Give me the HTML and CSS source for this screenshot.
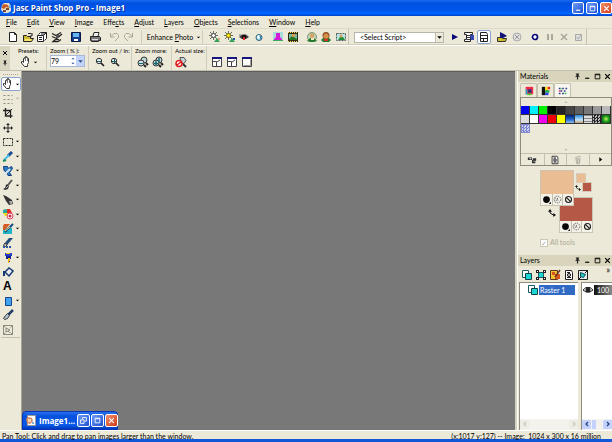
FILE: index.html
```html
<!DOCTYPE html>
<html lang="en">
<head>
<meta charset="utf-8">
<title>Jasc Paint Shop Pro - Image1</title>
<link rel="stylesheet" href="styles.css">
</head>
<body>
<svg class="defs" aria-hidden="true">
<symbol id="logo" viewBox="0 0 12 12"><path fill="#e8dccb" d="M2 3l2-2h5l2 3v5l-3 2H4L1 8z"/><path fill="#c45d25" d="M2 4l2-2 4 1 1 3-3-1-2 2-2-1z"/><path fill="#764936" d="M6 6h3v2H6zM3 8h3v2H3z"/><path fill="#77b4db" d="M9 3h2v3H9z"/></symbol>
<symbol id="page" viewBox="0 0 12 12"><path fill="#fff" stroke="#999" d="M2.500 .500h8v10h-8z"/><path fill="#d98a58" d="M1 4l2-2 4 1 1 3-3 3-3-1z"/><path fill="#f3d7b8" d="M3 4h3v3H3z"/><path fill="#77b4db" d="M7 7h2v2H7z"/></symbol>
<symbol id="new" viewBox="0 0 12 12"><path fill="#fff" stroke="#222" d="M2.500 1.500h5l2 2v7h-7zM7.500 1.500v2h2"/></symbol>
<symbol id="open" viewBox="0 0 12 12"><path fill="#d0bd32" stroke="#222" d="M1.500 10.500v-6h3l1 1h3v2h3l-2 3z"/><path fill="#f8e76a" d="M3 8h7l-1 2H2z"/><path fill="none" stroke="#222" d="M6 2.500h3l1 1M10 2v3H8"/></symbol>
<symbol id="browse" viewBox="0 0 12 12"><path fill="#fff" stroke="#222" d="M1.500 4.500h6v6h-6zM2.500 3.500l2-2h6v6l-2 2M7.500 4.500l3-3"/><path stroke="#222" d="M3 6.500h3M3 8.500h3M5 3h4"/></symbol>
<symbol id="twain" viewBox="0 0 12 12"><path fill="none" stroke="#222" stroke-width="1.300" d="M1 2.500l4 2 5-3M1 5.500l7 3M11 3L2 10.500h5l3-2"/><path fill="#555" d="M5 4h3v3H5z"/></symbol>
<symbol id="save" viewBox="0 0 12 12"><path fill="#153f8e" stroke="#061844" d="M1.500 1.500h9v9h-9z"/><path fill="#63b6ef" d="M3 2h6v4H3z"/><path fill="#fff" d="M4 8h4v2H4z"/></symbol>
<symbol id="print" viewBox="0 0 12 12"><path fill="#fff" stroke="#222" d="M4 5l1-3.500h5L9 5"/><path fill="#777" stroke="#222" d="M1.500 5.500h9l1 1v3h-2v1h-7v-1h-1z"/><path stroke="#ddd" d="M3 8.500h6M5 3.500h3"/></symbol>
<symbol id="undo" viewBox="0 0 12 12"><path fill="none" stroke="#aaa69b" d="M2.500 2v4h4M3 5.500l3-3h3l1.500 2v2L7 10"/></symbol>
<symbol id="redo" viewBox="0 0 12 12"><path fill="none" stroke="#aaa69b" d="M9.500 2v4h-4M9 5.500l-3-3H3L1.500 4.500v2L5 10"/></symbol>
<symbol id="sun" viewBox="0 0 12 12"><path stroke="#333" stroke-width=".700" d="M4.500 0v9M0 4.500h9M1 1l7 7M8 1L1 8"/><circle cx="4.500" cy="4.500" r="2" fill="#fff" stroke="#444"/><path fill="#35a05a" d="M5 11l3-4 3 4z"/><path fill="#e0a17c" d="M9 7h2v2H9z"/></symbol>
<symbol id="sun2" viewBox="0 0 12 12"><path stroke="#333" stroke-width=".700" d="M4.500 0v9M0 4.500h9M1 1l7 7M8 1L1 8"/><circle cx="4.500" cy="4.500" r="2" fill="#ffed16" stroke="#766b00"/><path fill="#35a05a" d="M5 11l3-4 3 4z"/><path fill="#2854aa" d="M9 7h2v2H9z"/></symbol>
<symbol id="redeye" viewBox="0 0 12 12"><path fill="#444" d="M1 6l3-2.500h4L11 6 8 8H4z"/><circle cx="6" cy="6" r="2.300" fill="#111"/><path fill="#dd2626" d="M5 6h2v3H5z"/><path stroke="#777" d="M1 4h2"/></symbol>
<symbol id="drop" viewBox="0 0 12 12"><circle cx="6" cy="6.500" r="3" fill="#9adbea" stroke="#315c76"/><path fill="#fff" d="M4 5l2-1 1 3-2 1z"/><path stroke="#176cab" d="M7 5l1 3"/></symbol>
<symbol id="pinkman" viewBox="0 0 12 12"><path fill="#a8dedb" d="M1 1h10v9H1z"/><path fill="#35a85a" d="M1 9h10v1H1z"/><path fill="#d61bd6" d="M4 2h4v4l2 2v1H2V8l2-2z"/></symbol>
<symbol id="film" viewBox="0 0 12 12"><path fill="#302b17" d="M1 1h10v10H1z"/><path fill="#77b9a0" d="M2 3h8v6H2z"/><path fill="#237522" d="M2 8l3-3 5 3v1H2z"/><path fill="#d99b53" d="M5 3h3v3H5z"/><path stroke="#f3df5a" stroke-dasharray="1 1" d="M1 1.500h10M1 10.500h10"/></symbol>
<symbol id="portrait" viewBox="0 0 12 12"><circle cx="6" cy="6" r="4.500" fill="#c6d5ba" stroke="#789978"/><path fill="#267a30" d="M1 10l3-3h4l3 3-3 1H4z"/><circle cx="6" cy="4.500" r="2.300" fill="#d3a266"/><path fill="#f6e7bf" d="M5 7h3v2H5z"/></symbol>
<symbol id="portrait2" viewBox="0 0 12 12"><path fill="#267a30" d="M1 9l3-3h4l3 3-2 2H3z"/><circle cx="6" cy="4.500" r="3.500" fill="#8e4d24"/><circle cx="6" cy="5" r="2.600" fill="#d59049"/><path fill="#d42e26" d="M4 8h4v2H4z"/></symbol>
<symbol id="frame" viewBox="0 0 12 12"><path fill="#b8e8e1" stroke="#555" stroke-dasharray="2 1" d="M1.500 2.500h9v7h-9z"/><path fill="#248b3a" d="M3 9l2-3h3l2 3z"/><circle cx="6" cy="5" r="1.500" fill="#d69c66"/></symbol>
<symbol id="play" viewBox="0 0 12 12"><path fill="#080878" d="M3 3l6 3-6 3z"/></symbol>
<symbol id="scriptedit" viewBox="0 0 12 12"><path fill="#fff" stroke="#222" d="M1.500 1.500h8v2h-2v7h-6v-2h2v-5h-2z"/><path stroke="#333" d="M4 4.500h4M4 6.500h4M4 8.500h3"/><path fill="#3949b4" d="M7 4h4v5H8z"/></symbol>
<symbol id="panel" viewBox="0 0 12 12"><path fill="#fff" stroke="#222" d="M2.500 1.500h6l1 2v7h-7zM2 4.500h8M2 7.500h8M5.500 8v3"/></symbol>
<symbol id="runscript" viewBox="0 0 12 12"><path fill="#cdbd24" stroke="#333" d="M1.500 10.500v-4h4l1 1h4l-1 3z"/><path fill="#101174" d="M4 1l4 2 3 2-4 2H4z"/></symbol>
<symbol id="stop" viewBox="0 0 12 12"><circle cx="6" cy="6" r="4" fill="#ddd" stroke="#aaa"/><path stroke="#999" d="M4 4l4 4M8 4L4 8"/></symbol>
<symbol id="record" viewBox="0 0 12 12"><circle cx="6" cy="6" r="2.500" fill="#fff" stroke="#080878" stroke-width="1.700"/></symbol>
<symbol id="pause" viewBox="0 0 12 12"><path fill="#aaa69b" d="M3 3h2v6H3zM7 3h2v6H7z"/></symbol>
<symbol id="cross" viewBox="0 0 12 12"><path fill="none" stroke="#aaa69b" stroke-width="1.500" d="M3 3l6 6M9 3L3 9"/></symbol>
<symbol id="saverec" viewBox="0 0 12 12"><path fill="#ddd" stroke="#aaa" d="M2.500 3.500h6v6h-6zM4 6l1 2 3-4"/></symbol>
<symbol id="hand" viewBox="0 0 12 12"><path fill="#fff" stroke="#333" d="M4.500 10.500L1.500 7V5.500h1l1 1v-4h1V1.500h1v-1h1v1h1v1h1v4l-1 2v2z"/><path stroke="#777" d="M5.500 2v3M7.500 3v2"/></symbol>
<symbol id="zoomout" viewBox="0 0 12 12"><circle cx="5" cy="5" r="2.700" fill="#e5f0f0" stroke="#333"/><path stroke="#222" stroke-width="1.700" d="M7 7l3 3"/><path stroke="#1e5d66" d="M3 5.500h4"/></symbol>
<symbol id="zoomin" viewBox="0 0 12 12"><circle cx="5" cy="5" r="2.700" fill="#e5f0f0" stroke="#333"/><path stroke="#222" stroke-width="1.700" d="M7 7l3 3"/><path stroke="#1e5d66" d="M3 5.500h4M5.500 3v4"/></symbol>
<symbol id="zoommore" viewBox="0 0 12 12"><circle cx="7" cy="4" r="3" fill="#bcd6d8" stroke="#333"/><circle cx="4" cy="7" r="3" fill="#cce0df" stroke="#333"/><path stroke="#222" stroke-width="2" d="M7 9l2 2M9 7l2 2"/><path stroke="#176c74" d="M2 7.500h4"/></symbol>
<symbol id="zoommorein" viewBox="0 0 12 12"><circle cx="7" cy="4" r="3" fill="#bcd6d8" stroke="#333"/><circle cx="4" cy="7" r="3" fill="#cce0df" stroke="#333"/><path stroke="#222" stroke-width="2" d="M7 9l2 2M9 7l2 2"/><path stroke="#176c74" stroke-width="1.500" d="M2 7.500h4M4 5v4M7 2v4"/></symbol>
<symbol id="actual" viewBox="0 0 12 12"><path fill="#bfd3dc" stroke="#555" d="M5 1.500h4l2 3-2 3H6z"/><path stroke="#333" stroke-width="2" d="M8 8l3 3"/><circle cx="4" cy="7.500" r="3" fill="#fff" stroke="#df1919" stroke-width="1.500"/><path stroke="#df1919" stroke-width="1.500" d="M2 9l4-3"/></symbol>
<symbol id="fit" viewBox="0 0 12 12"><path fill="#fff" stroke="#444" d="M1.500 1.500h9v9h-9zM1.500 5.500h4v5M6 6l3-2"/><path fill="#16167f" d="M1 1h10v2H1z"/></symbol>
<symbol id="fit2" viewBox="0 0 12 12"><path fill="#fff" stroke="#444" d="M1.500 1.500h9v9h-9z"/><path fill="#16167f" d="M1 1h10v2H1z"/><path fill="none" stroke="#999" d="M2.500 9.500h7v-6"/></symbol>
<symbol id="deform" viewBox="0 0 12 12"><path fill="none" stroke="#8b887c" stroke-dasharray="2 2" d="M1.500 2.500h9M1.500 6.500h9M1.500 10.500h9"/></symbol>
<symbol id="crop" viewBox="0 0 12 12"><path fill="none" stroke="#222" stroke-width="1.300" d="M3.500 1v8h7M1 3.500h7.500V11"/><path stroke="#222" d="M4 8l6-6"/></symbol>
<symbol id="move" viewBox="0 0 12 12"><path fill="#222" d="M6 1L4 3h4zM6 11L4 9h4zM1 6l2-2v4zM11 6L9 4v4z"/><path stroke="#222" d="M6 2v8M2 6h8"/></symbol>
<symbol id="marquee" viewBox="0 0 12 12"><path fill="none" stroke="#222" stroke-dasharray="2 1" d="M1.500 2.500h9v7h-9z"/></symbol>
<symbol id="dropper" viewBox="0 0 12 12"><path stroke="#1b4b93" stroke-width="3" d="M10 2L6 6"/><path stroke="#48bfe6" stroke-width="2" d="M7 5l-5 5"/><path stroke="#168a58" stroke-width="2" d="M1 11l3-1"/></symbol>
<symbol id="clone" viewBox="0 0 12 12"><path fill="#287cc5" stroke="#153c81" d="M1.500 1.500h4l1 2 3-2 1 2-3 4 2 3H6l-1-3-3-2z"/><path stroke="#d2e9ef" stroke-width="2" d="M2 10l6-6"/></symbol>
<symbol id="brush" viewBox="0 0 12 12"><path stroke="#555" stroke-width="2" d="M10 1L6 6"/><path fill="#333" d="M5 5l2 2-1 3-3 1-2-1 2-1 1-3z"/><path stroke="#bbb" d="M6 7L4 9"/></symbol>
<symbol id="air" viewBox="0 0 12 12"><path fill="#333" d="M1 1l3 1 6 4 1 4-4 1-3-4z"/><path fill="#aaa" d="M7 7h3v3H8z"/></symbol>
<symbol id="colorrep" viewBox="0 0 12 12"><path fill="#2ba69e" d="M1 5V2l3-1 3 2v4z"/><path fill="#f1da20" d="M1 5h5v3H3z"/><path fill="#e42c24" d="M5 1h3l2 4H5z"/><circle cx="8" cy="8" r="3" fill="#fff" stroke="#df3e61"/><circle cx="8" cy="8" r="1.500" fill="#ce2940"/></symbol>
<symbol id="retouch" viewBox="0 0 12 12"><path fill="#24b4c8" d="M1 5h9v6H1z"/><path fill="#d75b24" d="M2 1h6L3 7H1V3z"/><path stroke="#174883" stroke-width="2" d="M11 1L3 9"/><path stroke="#ffe46a" d="M8 4L3 8"/></symbol>
<symbol id="eraser" viewBox="0 0 12 12"><path fill="#234e7b" d="M7 1h4L6 7H2z"/><path fill="#ddd" stroke="#333" d="M2.500 6.500l3 1-2 2-2-1z"/><path stroke="#2758a3" stroke-width="2" stroke-dasharray="2 1" d="M1 10h9"/></symbol>
<symbol id="tube" viewBox="0 0 12 12"><path fill="#1f3fc4" d="M3 1h7v3H3z"/><path fill="#171f94" d="M4 4h5v3H8v3H6V7H4z"/><path fill="#f1bd16" d="M4 1h4v1H4zM6 6h2v3H7v2H6z"/></symbol>
<symbol id="fill" viewBox="0 0 12 12"><path fill="#eee" stroke="#163975" stroke-width="1.500" d="M3 6l4-4 4 3-4 5z"/><path fill="#163975" d="M1 5h2v5H1z"/></symbol>
<symbol id="rect" viewBox="0 0 12 12"><path fill="#3fa2ed" stroke="#194592" d="M3.500 2.500h6v8h-6z"/></symbol>
<symbol id="pen" viewBox="0 0 12 12"><path stroke="#263d69" stroke-width="2.500" d="M11 1L6 6"/><path fill="#aac5d0" stroke="#333" d="M5.500 4.500l2 2-2 3-3 1-1-1 2-3z"/></symbol>
<symbol id="objsel" viewBox="0 0 12 12"><path fill="none" stroke="#77746a" stroke-width=".800" d="M1.500 1.500h9v9h-9zM4 4l4 2-2 1 2 2M4 4v4l2-1M1.500 1.500l2 2M10.500 1.500l-2 2M1.500 10.500l2-2M10.500 10.500l-2-2"/></symbol>
<symbol id="tabframe" viewBox="0 0 12 12"><path fill="#ef2b45" d="M2 1h9v9H2z"/><path fill="#15afd3" d="M2 4h2v6H2z"/><path fill="#19347e" d="M5 4h4v4H5z"/><path fill="#4bca34" d="M4 9h5v2H4z"/></symbol>
<symbol id="tabrainbow" viewBox="0 0 12 12"><path fill="#111" d="M1 1h4v10H1z"/><path fill="#ffdc15" d="M5 1h3v5H5z"/><path fill="#ef2e22" d="M8 1h3v3H8z"/><path fill="#1fac49" d="M5 5h5v3H5z"/><path fill="#3042e2" d="M5 8h4v3H5z"/></symbol>
<symbol id="tabdots" viewBox="0 0 12 12"><path fill="#28367f" d="M1 2h2v2H1zM5 2h2v2H5zM9 2h2v2H9zM3 5h2v2H3zM7 5h2v2H7zM1 8h2v2H1zM5 8h2v2H5z"/><path fill="#32b857" d="M3 3h2v1H3zM8 8h2v2H8z"/><path fill="#d5538f" d="M1 5h2v2H1z"/></symbol>
<symbol id="swatchload" viewBox="0 0 12 12"><path fill="#333" d="M1 3h5v3H1zM7 4h4v3h-1v3H6V6h1z"/><path fill="#fff" d="M3 4h2v1H3zM8 7h1v1H8z"/></symbol>
<symbol id="doc" viewBox="0 0 12 12"><path fill="#fff" stroke="#222" d="M2.500 1.500h6l1 2v7h-7zM4 3.500h3M4 8.500h4"/><circle cx="6" cy="6" r="1.600" fill="#bbb" stroke="#222"/></symbol>
<symbol id="trash" viewBox="0 0 12 12"><path fill="#e6e3d6" stroke="#aaa69b" d="M3.500 4.500h5l-1 6h-3zM2.500 3.500l4-2 3 1M5.500 5v5M7.500 5v5"/></symbol>
<symbol id="dot" viewBox="0 0 12 12"><circle cx="6" cy="6" r="4.500" fill="#080808"/><path fill="#222" d="M12 9v3H9z"/></symbol>
<symbol id="texture" viewBox="0 0 12 12"><circle cx="6" cy="6" r="4.500" fill="none" stroke="#444" stroke-dasharray="2 1"/><path fill="none" stroke="#555" stroke-dasharray="2 1" d="M3 4l5 4M4 8l3-5"/></symbol>
<symbol id="none" viewBox="0 0 12 12"><circle cx="6" cy="6" r="4" fill="none" stroke="#222" stroke-width="1.500"/><path stroke="#222" stroke-width="1.500" d="M3 3l6 6"/></symbol>
<symbol id="swap" viewBox="0 0 12 12"><path fill="none" stroke="#111" stroke-width="1.500" d="M3 3v3l5 3h1"/><path fill="#111" d="M0 4l3-4 3 4zM12 9L8 6v6z"/></symbol>
<symbol id="layer" viewBox="0 0 12 12"><path fill="#fff" stroke="#185b6b" d="M1.500 1.500h6v7h-6z"/><path fill="#1bd5d2" stroke="#12434b" d="M4.500 4.500h6v6h-6z"/></symbol>
<symbol id="vector" viewBox="0 0 12 12"><path fill="#1bd5d2" stroke="#1c5960" d="M3.500 3.500h5v5h-5z"/><path fill="#222" d="M1 1h3v3H1zM8 1h3v3H8zM1 8h3v3H1zM8 8h3v3H8z"/><path fill="#fff" d="M2 2h1v1H2zM9 2h1v1H9zM2 9h1v1H2zM9 9h1v1H9z"/></symbol>
<symbol id="adjlayer" viewBox="0 0 12 12"><path fill="#f4c332" stroke="#5b361e" d="M1.500 1.500h7v9h-7z"/><path fill="#d5551d" d="M3 3h3v3H3zM6 5h5v5H6z"/><path stroke="#663823" stroke-width="1.500" d="M11 1L6 8"/></symbol>
<symbol id="group" viewBox="0 0 12 12"><path fill="#e7efed" stroke="#222" d="M1.500 1.500h9v9h-9z"/><path fill="#23c9c5" stroke="#164b56" d="M3.500 3.500l5 2-2 3-3-1z"/><path stroke="#111" d="M1 11l3-3M8 4l3-3"/></symbol>
<symbol id="eye" viewBox="0 0 12 12"><path fill="#fff" stroke="#222" d="M1 6l3-2.500h4L11 6 8 8H4z"/><circle cx="6" cy="6" r="2.500" fill="#222"/></symbol>
<symbol id="pin" viewBox="0 0 12 12"><path fill="#222" d="M3 1h6v1H8v4h2v1H2V6h2V2H3zM5 7h2v4H5z"/></symbol>
<symbol id="min" viewBox="0 0 12 12"><path fill="currentColor" d="M2 8h7v2H2z"/></symbol>
<symbol id="max" viewBox="0 0 12 12"><path fill="none" stroke="currentColor" stroke-width="1.500" d="M2 2h8v8H2zM2 3h8"/></symbol>
<symbol id="restore" viewBox="0 0 12 12"><path fill="none" stroke="currentColor" stroke-width="1.500" d="M4 4V1h7v6H8M1 5h6v6H1z"/></symbol>
<symbol id="close" viewBox="0 0 12 12"><path fill="none" stroke="currentColor" stroke-width="2" d="M2 2l8 8M10 2l-8 8"/></symbol>
<symbol id="down" viewBox="0 0 12 12"><path fill="currentColor" d="M2 4h8L6 8z"/></symbol>
<symbol id="up" viewBox="0 0 12 12"><path fill="currentColor" d="M2 8h8L6 4z"/></symbol>
<symbol id="right" viewBox="0 0 12 12"><path fill="currentColor" d="M4 2v8l5-4z"/></symbol>
<symbol id="chevl" viewBox="0 0 12 12"><path fill="none" stroke="currentColor" stroke-width="2.500" d="M8 2L4 6l4 4"/></symbol>
<symbol id="chevr" viewBox="0 0 12 12"><path fill="none" stroke="currentColor" stroke-width="2.500" d="M4 2l4 4-4 4"/></symbol>
</svg>

<header class="titlebar">
  <svg class="icon"><use href="#logo"/></svg>
  <h1>Jasc Paint Shop Pro - Image1</h1>
  <div class="winbtns">
    <button aria-label="Minimize"><svg><use href="#min"/></svg></button>
    <button aria-label="Maximize"><svg><use href="#max"/></svg></button>
    <button class="red" aria-label="Close"><svg><use href="#close"/></svg></button>
  </div>
</header>

<nav class="menu">
  <button><u>F</u>ile</button><button><u>E</u>dit</button><button><u>V</u>iew</button><button><u>I</u>mage</button><button>Effe<u>c</u>ts</button><button><u>A</u>djust</button><button><u>L</u>ayers</button><button><u>O</u>bjects</button><button><u>S</u>elections</button><button><u>W</u>indow</button><button><u>H</u>elp</button>
</nav>

<div class="toolbar">
  <div class="bar">
    <div class="set four"><button aria-label="New"><svg><use href="#new"/></svg></button><button aria-label="Open"><svg><use href="#open"/></svg></button><button aria-label="Browse"><svg><use href="#browse"/></svg></button><button aria-label="Acquire"><svg><use href="#twain"/></svg></button></div>
    <div class="set one"><button aria-label="Save"><svg><use href="#save"/></svg></button></div>
    <div class="set one"><button aria-label="Print"><svg><use href="#print"/></svg></button></div>
    <div class="set two"><button aria-label="Undo"><svg><use href="#undo"/></svg></button><button aria-label="Redo"><svg><use href="#redo"/></svg></button></div>
    <button class="enhance"><span>Enhance <u>P</u>hoto</span><svg class="arrow"><use href="#down"/></svg></button>
    <div class="set four"><button aria-label="Color balance"><svg><use href="#sun"/></svg></button><button aria-label="Contrast"><svg><use href="#sun2"/></svg></button><button aria-label="Red-eye removal"><svg><use href="#redeye"/></svg></button><button aria-label="Clarify"><svg><use href="#drop"/></svg></button></div>
    <div class="set two"><button aria-label="Cutout"><svg><use href="#pinkman"/></svg></button><button aria-label="Picture frame"><svg><use href="#film"/></svg></button></div>
    <div class="set three"><button aria-label="Soften"><svg><use href="#portrait"/></svg></button><button aria-label="Warm"><svg><use href="#portrait2"/></svg></button><button aria-label="Fit photo"><svg><use href="#frame"/></svg></button></div>
  </div>
  <div class="bar scripts">
    <div class="combo"><select aria-label="Script"><option>&lt;Select Script&gt;</option></select><svg class="arrow"><use href="#down"/></svg></div>
    <div class="set three"><button aria-label="Run"><svg><use href="#play"/></svg></button><button aria-label="Edit script"><svg><use href="#scriptedit"/></svg></button><button class="on" aria-label="Interactive"><svg><use href="#panel"/></svg></button></div>
    <div class="set two"><button aria-label="Run from file"><svg><use href="#runscript"/></svg></button><button aria-label="Stop"><svg><use href="#stop"/></svg></button></div>
    <div class="set four"><button aria-label="Record"><svg><use href="#record"/></svg></button><button aria-label="Pause"><svg><use href="#pause"/></svg></button><button aria-label="Cancel"><svg><use href="#cross"/></svg></button><button aria-label="Save recording"><svg><use href="#saverec"/></svg></button></div>
  </div>
</div>

<section class="options" aria-label="Tool options">
  <div class="handle"><button aria-label="Close"><svg><use href="#close"/></svg></button><button aria-label="Pin"><svg><use href="#pin"/></svg></button></div>
  <div class="opt presets"><span>Presets:</span><div><button aria-label="Presets"><svg><use href="#hand"/></svg><svg class="arrow"><use href="#down"/></svg></button></div></div>
  <div class="opt zoom"><label for="zoom">Zoom ( % ):</label><div class="spin"><input id="zoom" value="79"><span class="steps"><button aria-label="Up"><svg><use href="#up"/></svg></button><button aria-label="Down"><svg><use href="#down"/></svg></button></span><button class="slide" aria-label="Slider"><svg><use href="#down"/></svg></button></div></div>
  <div class="opt inout"><span>Zoom out / in:</span><div><button aria-label="Zoom out"><svg><use href="#zoomout"/></svg></button><button aria-label="Zoom in"><svg><use href="#zoomin"/></svg></button></div></div>
  <div class="opt more"><span>Zoom more:</span><div><button aria-label="Zoom out more"><svg><use href="#zoommore"/></svg></button><button aria-label="Zoom in more"><svg><use href="#zoommorein"/></svg></button></div></div>
  <div class="opt actual"><span>Actual size:</span><div><button aria-label="Actual size"><svg><use href="#actual"/></svg></button></div></div>
  <div class="opt fits"><div><button aria-label="Fit window to image"><svg><use href="#fit"/></svg></button><button aria-label="Fit image to window"><svg><use href="#fit"/></svg></button><button aria-label="Fit to screen"><svg><use href="#fit2"/></svg></button></div></div>
</section>

<main>
  <aside class="tools">
    <div class="grip"></div>
    <div class="toolgrid">
      <button class="on" aria-label="Pan"><svg><use href="#hand"/></svg><svg class="arrow"><use href="#down"/></svg></button>
      <button class="off" aria-label="Deform"><svg><use href="#deform"/></svg><svg class="arrow"><use href="#down"/></svg></button>
      <button aria-label="Crop"><svg><use href="#crop"/></svg></button>
      <button aria-label="Move"><svg><use href="#move"/></svg></button>
      <button aria-label="Selection"><svg><use href="#marquee"/></svg><svg class="arrow"><use href="#down"/></svg></button>
      <button aria-label="Dropper"><svg><use href="#dropper"/></svg><svg class="arrow"><use href="#down"/></svg></button>
      <button aria-label="Clone"><svg><use href="#clone"/></svg><svg class="arrow"><use href="#down"/></svg></button>
      <button aria-label="Paint brush"><svg><use href="#brush"/></svg><svg class="arrow"><use href="#down"/></svg></button>
      <button aria-label="Dodge"><svg><use href="#air"/></svg><svg class="arrow"><use href="#down"/></svg></button>
      <button aria-label="Color replacer"><svg><use href="#colorrep"/></svg><svg class="arrow"><use href="#down"/></svg></button>
      <button aria-label="Retouch"><svg><use href="#retouch"/></svg><svg class="arrow"><use href="#down"/></svg></button>
      <button aria-label="Eraser"><svg><use href="#eraser"/></svg></button>
      <button aria-label="Picture tube"><svg><use href="#tube"/></svg><svg class="arrow"><use href="#down"/></svg></button>
      <button aria-label="Flood fill"><svg><use href="#fill"/></svg></button>
      <button class="letter" aria-label="Text">A</button>
      <button aria-label="Shapes"><svg><use href="#rect"/></svg><svg class="arrow"><use href="#down"/></svg></button>
      <button aria-label="Pen"><svg><use href="#pen"/></svg></button>
      <button aria-label="Object selection"><svg><use href="#objsel"/></svg></button>
    </div>
  </aside>

  <section class="workspace" aria-label="Workspace">
    <div class="child">
      <svg class="icon"><use href="#page"/></svg><span>Image1...</span>
      <div class="winbtns">
        <button aria-label="Restore"><svg><use href="#restore"/></svg></button>
        <button aria-label="Maximize"><svg><use href="#max"/></svg></button>
        <button class="red" aria-label="Close"><svg><use href="#close"/></svg></button>
      </div>
    </div>
  </section>

  <aside class="side">
    <section class="materials">
      <header class="phead"><h2>Materials</h2><button aria-label="Pin"><svg><use href="#pin"/></svg></button><button aria-label="Roll up"><svg><use href="#min"/></svg></button><button aria-label="Expand"><svg><use href="#max"/></svg></button><button aria-label="Close"><svg><use href="#close"/></svg></button></header>
      <div class="tabs"><button aria-label="Frame"><svg><use href="#tabframe"/></svg></button><button aria-label="Rainbow"><svg><use href="#tabrainbow"/></svg></button><button class="current" aria-label="Swatches"><svg><use href="#tabdots"/></svg></button></div>
      <div class="swbox">
        <button class="scroll" aria-label="Scroll up"><svg><use href="#up"/></svg></button>
        <div class="swatches">
          <i class="c-blue"></i><i class="c-cyan"></i><i class="c-green"></i><i class="c-black"></i><i class="c-g1"></i><i class="c-g2"></i><i class="c-g3"></i><i class="c-g4"></i><i class="c-g5"></i><i class="c-g6"></i>
          <i class="c-g7"></i><i class="c-white"></i><i class="c-magenta"></i><i class="c-red"></i><i class="c-yellow"></i><i class="c-sea"></i><i class="c-sky"></i><i class="c-lines"></i><i class="c-check"></i><i class="c-leaf"></i>
          <i class="c-weave"></i>
        </div>
        <button class="scroll" aria-label="Scroll down"><svg><use href="#down"/></svg></button>
        <div class="swtools"><button aria-label="View"><svg><use href="#swatchload"/></svg></button><button aria-label="New swatch"><svg><use href="#doc"/></svg></button><button aria-label="Delete"><svg><use href="#trash"/></svg></button><button aria-label="More"><svg class="next"><use href="#right"/></svg></button></div>
      </div>
      <div class="colors">
        <div class="well bg"><div class="paint"></div><div class="modes"><button aria-label="Color"><svg><use href="#dot"/></svg></button><button aria-label="Texture"><svg><use href="#texture"/></svg></button><button aria-label="Transparent"><svg><use href="#none"/></svg></button></div></div>
        <div class="well fg"><div class="paint"></div><div class="modes"><button aria-label="Color"><svg><use href="#dot"/></svg></button><button aria-label="Texture"><svg><use href="#texture"/></svg></button><button aria-label="Transparent"><svg><use href="#none"/></svg></button></div></div>
        <div class="mini"><i class="m2"></i><i class="m1"></i><svg><use href="#swap"/></svg></div>
        <button class="swap" aria-label="Swap materials"><svg><use href="#swap"/></svg></button>
      </div>
      <label class="all"><input type="checkbox" checked disabled>All tools</label>
    </section>

    <section class="layers">
      <header class="phead"><h2>Layers</h2><button aria-label="Pin"><svg><use href="#pin"/></svg></button><button aria-label="Roll up"><svg><use href="#min"/></svg></button><button aria-label="Expand"><svg><use href="#max"/></svg></button><button aria-label="Close"><svg><use href="#close"/></svg></button></header>
      <div class="ltools"><button aria-label="New raster layer"><svg><use href="#layer"/></svg></button><button aria-label="New vector layer"><svg><use href="#vector"/></svg></button><button aria-label="New adjustment layer"><svg><use href="#adjlayer"/></svg></button><button aria-label="New mask layer"><svg><use href="#doc"/></svg></button><button aria-label="New group"><svg><use href="#group"/></svg></button><button class="overflow" aria-label="More">»</button></div>
      <div class="panes">
        <div class="pane names"><div class="row"><svg><use href="#layer"/></svg><span>Raster 1</span></div><div class="hscroll off"><button aria-label="Left"><svg><use href="#chevl"/></svg></button><button aria-label="Right"><svg><use href="#chevr"/></svg></button></div></div>
        <div class="pane props"><div class="row"><svg><use href="#eye"/></svg><span>100</span></div><div class="hscroll"><button aria-label="Left"><svg><use href="#chevl"/></svg></button><i></i><button aria-label="Right"><svg><use href="#chevr"/></svg></button></div></div>
      </div>
    </section>
  </aside>
</main>

<footer class="status"><span>Pan Tool: Click and drag to pan images larger than the window.</span><span>(x:1017 y:127) -- Image:&nbsp; 1024 x 300 x 16 million</span></footer>
</body>
</html>
```
FILE: styles.css
```css
* { box-sizing: border-box; }

html, body { height: 100%; margin: 0; }

body {
  display: flex;
  flex-direction: column;
  overflow: hidden;
  background: #ece9d8;
  color: #000;
  font: 7px/9px Lato, "Liberation Sans", sans-serif;
}

button, input, select { font: inherit; color: inherit; margin: 0; padding: 0; border: 0; background: none; }
button { display: flex; align-items: center; justify-content: center; }
svg { display: block; width: 12px; height: 12px; flex: none; }
svg.arrow { width: 5px; height: 5px; }
.defs { position: absolute; width: 0; height: 0; }
h1, h2 { margin: 0; font: inherit; }
i { display: block; }

.titlebar {
  display: flex;
  align-items: center;
  height: 16px;
  padding: 0;
  gap: 1px;
  background: linear-gradient(#1a6cf0, #0050e0 20%, #0055ea 60%, #0066ff 85%, #0040c8);
  color: #fff;
}
.titlebar h1 { flex: 1; font: bold 8px/12px "Open Sans", sans-serif; text-shadow: 1px 1px #0a2f96; white-space: nowrap; }
.winbtns { display: flex; gap: 2px; }
.winbtns button { width: 12px; height: 12px; border: 1px solid #fff; border-radius: 2px; background: linear-gradient(135deg, #6d9cf5, #1e50d2); color: #fff; }
.winbtns svg { width: 7px; height: 7px; }
.winbtns .red { background: linear-gradient(135deg, #f0916f, #d33a16); }

.menu { display: flex; align-items: center; height: 13px; padding-left: 6px; gap: 10px; border-bottom: 1px solid #dedac8; }

.toolbar { display: flex; height: 17px; border-bottom: 1px solid #fff; box-shadow: inset 0 -1px #d2cdb8; }
.bar { display: flex; align-items: center; padding-left: 6px; gap: 5px; border-right: 1px solid #c5c1ae; }
.bar.scripts { padding-left: 5px; gap: 4px; }
.set { display: grid; grid-auto-flow: column; grid-auto-columns: 1fr; height: 14px; }
.four { width: 58px; }
.three { width: 43px; }
.two { width: 29px; }
.one { width: 14px; }
.enhance { height: 14px; padding-left: 4px; gap: 3px; border-left: 1px solid #d2cdb8; border-right: 1px solid #d2cdb8; width: 62px; white-space: nowrap; }
.on { border: 1px solid #8aa4cc; border-radius: 2px; background: #fff; }
.combo { display: flex; align-items: center; position: relative; width: 90px; height: 11px; border: 1px solid #b5b6ac; background: #fff; }
.combo select { appearance: none; width: 100%; height: 9px; padding-left: 5px; outline: 0; }
.combo .arrow { position: absolute; right: 0; top: 0; width: 8px; height: 9px; border-left: 1px solid #c5c1ae; background: #ece9d8; }

.options { display: flex; height: 25px; border-bottom: 1px solid #c4c0af; }
.handle { display: flex; flex-direction: column; justify-content: space-evenly; align-items: center; width: 10px; background: #d9d5c0; }
.handle svg { width: 6px; height: 6px; }
.opt { padding: 0 3px; border-right: 1px solid #d0ccb9; white-space: nowrap; }
.opt > span, .opt > label { display: block; height: 9px; }
.opt > div { display: flex; align-items: center; gap: 3px; height: 14px; }
.opt > span, .opt > label { font-size: 6px; }
.presets { width: 37px; padding-left: 8px; }
.presets > div { padding-left: 2px; }
.presets button { gap: 1px; }
.zoom { width: 42px; }
.inout { width: 43px; }
.inout > div, .more > div { padding-left: 2px; }
.more { width: 40px; }
.actual { width: 35px; }
.fits { padding: 9px 4px 0; border: 0; }
.opt > .spin { gap: 0; height: 12px; border: 1px solid #a9b8d6; background: #fff; }
.spin input { flex: 1; min-width: 0; height: 10px; outline: 0; }
.steps svg { width: 6px; height: 5px; color: #315292; }
.slide { width: 8px; height: 10px; background: #c3d3fd; color: #315292; }
.slide svg { width: 7px; height: 7px; }

main { display: flex; flex: 1; min-height: 0; }
.tools { width: 22px; padding: 3px 1px 0; border-right: 1px solid #aaa694; }
.grip { height: 2px; margin: 0 2px 1px; border-top: 1px dotted #aaa694; }
.toolgrid { display: grid; grid-auto-rows: 1fr; height: 261px; border-bottom: 1px solid #c5c1ae; }
.toolgrid button { justify-content: flex-start; gap: 1px; padding-left: 1px; min-height: 0; }
.toolgrid .on { padding-left: 0; }
.toolgrid .off { color: #aaa69b; }
.toolgrid .letter { padding-left: 2px; font: bold 12px/12px "Liberation Sans", sans-serif; }

.workspace { flex: 1; display: flex; align-items: flex-end; background: #787878; border-top: 1px solid #5c5c5c; }
.child { display: flex; align-items: center; gap: 2px; width: 96px; height: 19px; padding: 0 3px 0 2px; border-radius: 4px 4px 0 0; background: linear-gradient(#2a72f0, #0550dc 25%, #0a5cec 75%, #0038bc); border: 1px solid #0735b8; color: #fff; }
.child span { flex: 1; font: bold 8px/12px "Open Sans", sans-serif; }
.child .winbtns { gap: 1px; }
.child .winbtns button { width: 13px; height: 13px; }

.side { display: flex; flex-direction: column; width: 97px; border-left: 2px solid #d6d2c0; padding-left: 1px; box-shadow: inset 1px 0 #fff; }
.materials { height: 184px; }
.phead { display: flex; align-items: center; height: 11px; margin-bottom: 1px; padding-left: 2px; background: #d9d5bc; }
.phead h2 { flex: 1; }
.phead button { width: 10px; }
.phead svg { width: 7px; height: 7px; }
.tabs { display: flex; height: 14px; padding-left: 2px; }
.tabs button { width: 17px; border: 1px solid #c4c0ae; border-bottom: 0; border-radius: 2px 2px 0 0; }
.tabs .current { background: #f8f7ef; }
.tabs svg { width: 10px; height: 10px; }
.swbox { display: grid; grid-template-rows: 8px 1fr 6px 12px; height: 69px; margin-left: 2px; border: 1px solid #8f8c7e; }
.scroll svg { width: 4px; height: 4px; color: #aaa69b; }
.swatches { display: grid; grid-template-columns: repeat(10, 9px); grid-auto-rows: 9px; }
.swatches i { border: 1px solid #333; border-width: 0 1px 1px 0; }
.c-blue { background: #0000f0; } .c-cyan { background: #00f0ff; } .c-green { background: #00f000; }
.c-black { background: #000; } .c-g1 { background: #242424; } .c-g2 { background: #444; }
.c-g3 { background: #606060; } .c-g4 { background: #787878; } .c-g5 { background: #989898; }
.c-g6 { background: #b8b8b8; } .c-g7 { background: #dcdcdc; } .c-white { background: #fff; }
.c-magenta { background: #f000f0; } .c-red { background: #f00000; } .c-yellow { background: #ffff00; }
.c-sea { background: linear-gradient(#051e72, #1c5cc4 50%, #8cc4f4); }
.c-sky { background: linear-gradient(#2a87d7, #bfe6ff 60%, #cb9d76); }
.c-lines { background: repeating-linear-gradient(#888 0 1px, #ddd 1px 3px); }
.c-check { background: repeating-conic-gradient(#222 0 25%, #bbb 0 50%) 0 0 / 3px 3px; }
.c-leaf { background: radial-gradient(#cff25d, #1c9c1c 50%, #095a10); }
.swatches .c-weave { background: repeating-conic-gradient(#7f86d0 0 25%, #cfd3f5 0 50%) 0 0 / 3px 3px; border: 1px solid #7f86d0; }
.swtools { display: grid; grid-template-columns: repeat(4, 1fr); border-top: 1px solid #c4c0ae; }
.swtools button + button { border-left: 1px solid #c4c0ae; }
.swtools svg { width: 10px; height: 10px; }
.swtools .next { width: 7px; height: 7px; }
.colors { position: relative; height: 62px; margin: 4px 0 6px 22px; width: 53px; }
.well { position: absolute; width: 34px; border: 1px solid #c9c5b2; background: #fff; }
.paint { height: 23px; }
.modes { display: grid; grid-template-columns: repeat(3, 1fr); height: 11px; background: #f4f2e8; }
.modes button + button { border-left: 1px solid #c4c0ae; }
.modes svg { width: 9px; height: 9px; }
.fg { left: 0; top: 0; }
.fg .paint { background: #ebbd93; }
.bg { right: 0; top: 27px; }
.bg .paint { background: #b55845; }
.mini i { position: absolute; width: 10px; height: 10px; border: 1px solid #d9c9b9; }
.mini .m1 { left: 36px; top: 3px; background: #ebbd93; }
.mini .m2 { left: 42px; top: 12px; background: #b55845; }
.mini svg { position: absolute; left: 35px; top: 15px; width: 6px; height: 6px; }
.swap { position: absolute; left: 8px; top: 39px; }
.swap svg { width: 8px; height: 8px; }
.all { display: flex; align-items: center; gap: 2px; padding-left: 22px; color: #aca899; }
.all input { appearance: none; width: 8px; height: 8px; border: 1px solid #c9c7ba; background: #fff; }
.all input::before { content: "✓"; display: block; font-size: 7px; line-height: 6px; text-align: center; }

.layers { display: flex; flex-direction: column; flex: 1; min-height: 0; }
.ltools { display: flex; align-items: center; height: 15px; padding: 0 2px 0 3px; gap: 2px; }
.ltools .overflow { margin-left: auto; font-size: 9px; line-height: 6px; align-self: flex-start; }
.panes { display: flex; flex: 1; gap: 3px; min-height: 0; padding-left: 1px; }
.pane { display: flex; flex-direction: column; justify-content: space-between; background: #fff; border: 1px solid #8f8c7e; border-width: 1px 0 0 1px; }
.names { width: 59px; }
.props { flex: 1; }
.row { display: flex; align-items: center; height: 11px; margin-top: 1px; }
.names .row { padding-left: 7px; }
.row span { flex: 1; padding-left: 1px; background: #316ac5; color: #fff; line-height: 10px; white-space: nowrap; }
.names .row span { margin-right: 3px; }
.props .row span { padding-left: 3px; background: linear-gradient(90deg, #111, #888); }
.hscroll { display: flex; align-items: center; justify-content: space-between; height: 11px; padding-bottom: 1px; background: #f3f2ec; }
.hscroll button { width: 9px; height: 9px; border-radius: 1px; background: #c3d3fd; color: #27427c; }
.hscroll svg { width: 6px; height: 6px; }
.hscroll i { width: 4px; height: 9px; margin-right: 6px; background: #c3d3fd; }
.hscroll.off button { background: #eeede5; color: #c9c7ba; }

.status { display: flex; justify-content: space-between; height: 12px; padding: 1px 11px 0 2px; border-top: 1px solid #fff; border-bottom: 3px solid #1257d8; line-height: 8px; white-space: nowrap; }
```
